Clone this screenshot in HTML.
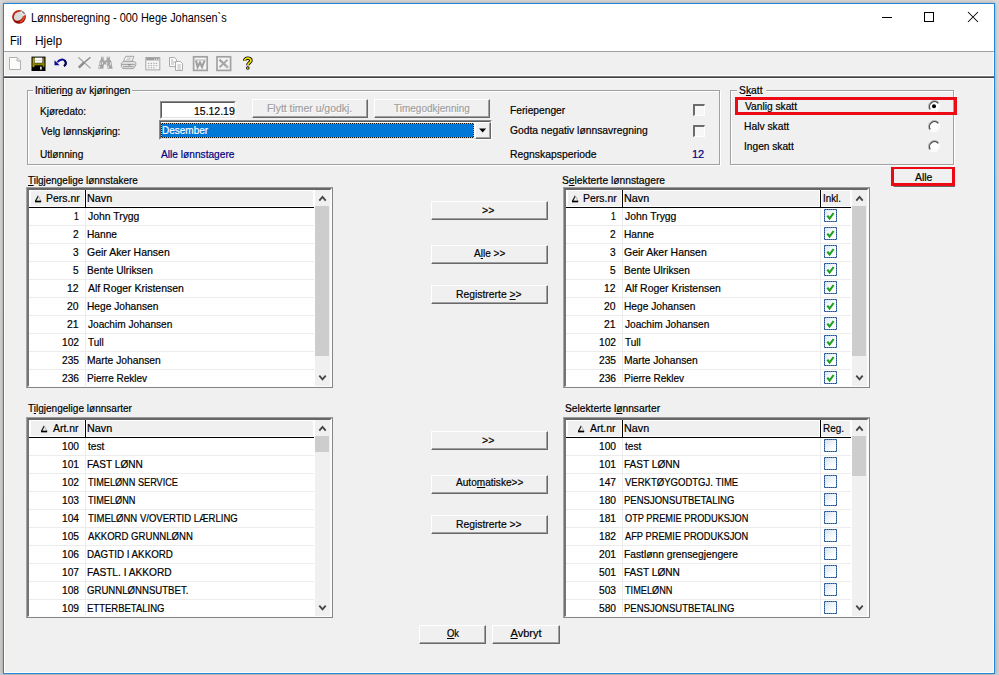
<!DOCTYPE html>
<html lang="no">
<head>
<meta charset="utf-8">
<title>Lønnsberegning - 000 Hege Johansen`s</title>
<style>
*{box-sizing:border-box;margin:0;padding:0}
html,body{width:999px;height:675px;overflow:hidden}
body{background:#d2d2d2;font-family:"Liberation Sans",sans-serif;font-size:11px;position:relative}
#shade{position:absolute;left:0;top:0;width:999px;height:675px;background:linear-gradient(180deg,#dadada 0,#cfcfcf 100%)}
#win{position:absolute;left:3px;top:3px;width:992px;height:671px;border:1px solid #2386d8;background:#f0f0f0;box-shadow:0 0 4px rgba(0,0,0,.28)}
.abs,#root div,#root span,#root svg{position:absolute}
#root{position:absolute;left:0;top:0;width:999px;height:675px}
.t{transform-origin:0 0;-webkit-text-stroke:0.2px currentColor;white-space:nowrap;font-size:11px;line-height:13px;height:13px;color:#000;display:block}
.t12{font-size:12px;line-height:14px;height:14px;-webkit-text-stroke:0}
.t u{text-decoration:underline;text-underline-offset:0.5px;text-decoration-thickness:1px}
.dis{color:#a0a0a0;text-shadow:1px 1px 0 #fff}
/* classic button */
.btn{background:#f0f0f0;border-top:1px solid #fff;border-left:1px solid #fff;border-right:1px solid #696969;border-bottom:1px solid #696969}
.btn:after{content:"";position:absolute;left:0;top:0;right:0;bottom:0;border-right:1px solid #a0a0a0;border-bottom:1px solid #a0a0a0}
/* group box */
.gb{border:1px solid #a0a0a0;box-shadow:1px 1px 0 #fff, inset 1px 1px 0 #fff}
.gbl{background:#f0f0f0;height:3px}
/* sunken field */
.sunk{background:#fff;border-top:1px solid #8a8a8a;border-left:1px solid #8a8a8a;border-right:1px solid #fff;border-bottom:1px solid #fff}
.sunk:after{content:"";position:absolute;left:0;top:0;right:0;bottom:0;border-top:1px solid #5c5c5c;border-left:1px solid #5c5c5c;border-right:1px solid #e3e3e3;border-bottom:1px solid #e3e3e3}
/* list box */
.lb{width:307px;height:201px;background:#fff;border-top:1px solid #9a9a9a;border-left:1px solid #a4a4a4;border-right:1px solid #868686;border-bottom:1px solid #868686}
.lb:after{content:"";position:absolute;left:0;top:0;right:0;bottom:0;border-top:2px solid #676767;border-left:2px solid #747474;border-right:2px solid #fbfbfb;border-bottom:1px solid #fbfbfb}
.hd{height:17px;background:#fff;border-bottom:0}
.hf{height:15px;background:#f0f0f0}
.vd{width:1px;height:18px;background:#000}
.hd:after{content:"";position:absolute;left:0;right:0;top:17px;height:1px;background:#000}
.rs{height:1px;background:#ececec}
.cs{width:1px;height:178px;background:#ececec}
.sb{width:15px;height:196px;background:#f0f0f0}
.th{width:14px;background:#cdcdcd}
.cb{width:13px;height:13px;background:linear-gradient(135deg,#dde7f2 0,#f6f9fc 45%,#fff 70%);border:1px solid #24508c;outline:1px dotted rgba(150,180,220,.5);outline-offset:-1px;overflow:hidden}
.cb svg{left:0;top:0}
.cb.un{background:linear-gradient(135deg,#d6e2ee 0,#f2f6fa 50%,#fff 80%)}
.chk{width:12px;height:12px;background:#f7f7f7;border-top:2px solid #6c6c6c;border-left:2px solid #6c6c6c;border-right:1px solid #fff;border-bottom:1px solid #fff}
.red{border:3px solid #ec0a14}
</style>
</head>
<body>
<div id="shade"></div>
<div id="win"></div>
<div id="root">
<!-- title + menu area -->
<div style="left:4px;top:4px;width:990px;height:47px;background:#fff"></div>
<div style="left:4px;top:51px;width:990px;height:1px;background:#a0a0a0"></div>
<div style="left:4px;top:52px;width:1px;height:621px;background:#fffdf5"></div>
<div style="left:993px;top:52px;width:1px;height:621px;background:#fffdf5"></div>
<div style="left:4px;top:672px;width:990px;height:1px;background:#fffdf5"></div>
<!-- toolbar separators -->
<div style="left:5px;top:75px;width:988px;height:1px;background:#fff"></div>
<div style="left:4px;top:76px;width:990px;height:1px;background:#7c7c7c"></div>
<div style="left:4px;top:77px;width:990px;height:1px;background:#3e3e3e"></div>
<div style="left:5px;top:78px;width:988px;height:1px;background:#fff"></div>

<!-- app icon -->
<svg style="left:11px;top:9px" width="16" height="16" viewBox="0 0 16 16">
 <defs><linearGradient id="ig" x1="0" y1="0" x2="0.3" y2="1"><stop offset="0" stop-color="#c43a20"/><stop offset="0.55" stop-color="#b01c0c"/><stop offset="1" stop-color="#860804"/></linearGradient></defs>
 <circle cx="8" cy="7.8" r="6.9" fill="url(#ig)"/>
 <path d="M13.6 6.2 A6 6 0 0 1 9 13.9 L8.6 12.2 A4.4 4.4 0 0 0 12 6.6 Z" fill="#ee4a1e"/>
 <ellipse cx="7.5" cy="7.3" rx="5.1" ry="4" transform="rotate(-42 7.5 7.3)" fill="#dadada"/>
 <path d="M9.2 2.2 L12.4 1.9 L14.4 5.6 L12.6 7.2 Z" fill="#e9e9e9"/>
 <path d="M11.2 2.3 L13.6 4.9" stroke="#6a6a6a" stroke-width="1.1"/>
</svg>

<!-- caption buttons -->
<div style="left:882px;top:17px;width:10px;height:1px;background:#000"></div>
<div style="left:924px;top:12px;width:10px;height:10px;border:1px solid #000"></div>
<svg style="left:967px;top:11px" width="12" height="12" viewBox="0 0 12 12"><path d="M1 1 L11 11 M11 1 L1 11" stroke="#000" stroke-width="1.05" fill="none"/></svg>

<!-- toolbar icons -->
<!-- new (disabled) -->
<svg style="left:8px;top:56px" width="15" height="16" viewBox="0 0 15 16">
 <path d="M1.5 1.5 H9 L12.5 5 V13.5 H1.5 Z" fill="#fbfbfb" stroke="#b0b0b0" stroke-width="1"/>
 <path d="M9 1.5 V5 H12.5" fill="none" stroke="#b0b0b0" stroke-width="1"/>
 <path d="M2.5 13 V2.5 H8.5" fill="none" stroke="#fff" stroke-width="1"/>
</svg>
<!-- save -->
<svg style="left:31px;top:56px" width="15" height="16" viewBox="0 0 15 16">
 <rect x="0.5" y="0.6" width="14" height="14.4" fill="#000"/>
 <rect x="1.6" y="1.6" width="2" height="9.5" fill="#b4a800"/>
 <rect x="11.6" y="1.6" width="1.8" height="9.5" fill="#8a8200"/>
 <rect x="3.8" y="1.6" width="7.6" height="5.2" fill="#fff"/>
 <rect x="3.8" y="4" width="7.6" height="1" fill="#d8d8d8"/>
 <rect x="1.6" y="7.2" width="11.8" height="2.2" fill="#8c8400"/>
 <rect x="3.6" y="9.8" width="8" height="4.4" fill="#000"/>
 <rect x="9" y="10.6" width="1.8" height="3" fill="#d0d0d0"/>
</svg>
<!-- undo -->
<svg style="left:53px;top:57px" width="15" height="13" viewBox="0 0 15 13">
 <path d="M4.4 5.2 C6.2 2.6 10 1.6 12 3.8 C13.6 5.6 13 8 10.9 9" fill="none" stroke="#0c0c98" stroke-width="1.9"/>
 <path d="M11.6 3.4 C13.4 5.4 13 8 10.9 9" fill="none" stroke="#050540" stroke-width="1.9"/>
 <path d="M1.5 3.3 V8.3 H6.6 Z" fill="#0a0a96"/>
</svg>
<!-- delete X (disabled) -->
<svg style="left:77px;top:56px" width="16" height="16" viewBox="0 0 16 16">
 <path d="M2.4 2.6 L14.2 13.4" stroke="#fff" stroke-width="1"/>
 <path d="M1.4 1.4 L13.6 12.4" stroke="#9a9a9a" stroke-width="1.2"/>
 <path d="M13.4 1.2 L6 7.6" stroke="#8e8e8e" stroke-width="1.5"/>
 <path d="M7 6.6 L1.8 11.6" stroke="#8c8c8c" stroke-width="2.6"/>
</svg>
<!-- binoculars (disabled) -->
<svg style="left:97px;top:56px" width="17" height="16" viewBox="0 0 17 16">
 <g fill="#a4a4a4">
 <path d="M4 0.8 H6.6 V3.4 L7.5 5 L6.3 12.8 H1.1 L2.7 5 L4 3.4 Z"/>
 <path d="M9.7 0.8 H12.9 V3.4 L14.3 5.2 L15.6 12.8 H10.6 L9 5 L9.7 3.4 Z"/>
 <rect x="6.4" y="4.6" width="3.6" height="3.8"/>
 </g>
 <path d="M4.8 1.6 h1 M10.6 1.6 h1.2 M3.2 6.5 v2.5 M2.4 10 v2 M5.4 5.8 v2.4 M9.8 6 v2.6 M11.2 9.6 v2.4 M13.4 6.4 v3" stroke="#e8e8e8" stroke-width="1"/>
</svg>
<!-- printer (disabled) -->
<svg style="left:120px;top:55px" width="17" height="16" viewBox="0 0 17 16">
 <path d="M5.7 1.3 H13.9 L12 6.3 H3.4 Z" fill="#f6f6f6" stroke="#a6a6a6"/>
 <path d="M1.4 8.2 L3.2 6.4 H14.4 L15.8 7.6 V10 L13.4 13.6 H2.8 L1.4 11.4 Z" fill="#e2e2e2" stroke="#a2a2a2"/>
 <path d="M2 9.4 H14.6 M3 11.6 H13.6" stroke="#9e9e9e" stroke-width="1"/>
 <path d="M7 3 H11.6 M6.4 4.6 H10.4" stroke="#c0c0c0" stroke-width=".9"/>
 <rect x="8.2" y="9.2" width="2.6" height="1.2" fill="#888"/>
</svg>
<!-- calendar (disabled) -->
<svg style="left:145px;top:56px" width="16" height="16" viewBox="0 0 16 16">
 <rect x="0.8" y="1.5" width="14" height="12.4" fill="#f4f4f4" stroke="#a8a8a8"/>
 <rect x="1.3" y="2" width="13" height="2.4" fill="#9c9c9c"/>
 <path d="M3 7.4 h1.4 m1.2 0 h1.4 m1.2 0 h1.4 m1.2 0 h1.4 M3 9.6 h1.4 m1.2 0 h1.4 m1.2 0 h1.4 m1.2 0 h1.4 M3 11.8 h1.4 m1.2 0 h1.4 m1.2 0 h1.4" stroke="#a8a8a8" stroke-width="1"/>
 <path d="M9 3.2 h1 m1 0 h1 m1 0 h1" stroke="#f0f0f0" stroke-width="1"/>
</svg>
<!-- copy (disabled) -->
<svg style="left:168px;top:56px" width="16" height="16" viewBox="0 0 16 16">
 <path d="M1.5 1.5 H6.5 L8.5 3.5 V10.5 H1.5 Z" fill="#fcfcfc" stroke="#aaaaaa"/>
 <path d="M3 4 h2 M3 6 h4 M3 8 h3" stroke="#b4b4b4" stroke-width="1"/>
 <path d="M7.5 5.5 H12.5 L14.5 7.5 V14.5 H7.5 Z" fill="#fcfcfc" stroke="#aaaaaa"/>
 <path d="M9.4 9 h3.4 M9.4 11 h3.4 M9.4 13 h3.4" stroke="#b4b4b4" stroke-width="1"/>
</svg>
<!-- word (disabled) -->
<svg style="left:192px;top:55px" width="17" height="17" viewBox="0 0 17 17">
 <rect x="1.6" y="1.8" width="13.6" height="13.6" fill="#f4f4f4" stroke="#a2a2a2" stroke-width="1.7"/>
 <path d="M4 5.4 L5.6 12 L8 7.4 L10 12 L12.6 5.4" fill="none" stroke="#a0a0a0" stroke-width="2.1"/>
 <path d="M3 5 H13.6" stroke="#b8b8b8" stroke-width="1"/>
</svg>
<!-- excel (disabled) -->
<svg style="left:215px;top:55px" width="17" height="17" viewBox="0 0 17 17">
 <rect x="2" y="1.8" width="13.6" height="13.6" fill="#f4f4f4" stroke="#a2a2a2" stroke-width="1.7"/>
 <path d="M4.4 4.6 L13 12.6" fill="none" stroke="#a4a4a4" stroke-width="2.2"/>
 <path d="M12.6 4.6 L8.6 8.4 L4.4 12.4" fill="none" stroke="#a8a8a8" stroke-width="2"/>
 <path d="M9.8 11.8 H13.4" stroke="#c0c0c0" stroke-width="1.2"/>
</svg>
<!-- help ? -->
<svg style="left:242px;top:56px" width="12" height="15" viewBox="0 0 12 15">
 <path d="M2.7 4.6 C2.5 1.5 9 1.3 9 4.5 C9 6.7 5.8 6.7 5.8 9.3" fill="none" stroke="#000" stroke-width="3.4"/>
 <path d="M2.7 4.6 C2.5 1.5 9 1.3 9 4.5 C9 6.7 5.8 6.7 5.8 9.3" fill="none" stroke="#f4e400" stroke-width="1.7"/>
 <circle cx="5.8" cy="12.1" r="1.75" fill="#000"/>
 <circle cx="5.8" cy="12.1" r="0.9" fill="#f4e400"/>
</svg>

<!-- group box: Initiering av kjøringen -->
<div class="gb" style="left:27px;top:90px;width:693px;height:75px"></div>
<div class="gbl" style="left:33px;top:89px;width:99px"></div>
<!-- date field -->
<div class="sunk" style="left:160px;top:101px;width:76px;height:18px"></div>
<!-- disabled buttons -->
<div class="btn" style="left:252px;top:99px;width:116px;height:19px"></div>
<div class="btn" style="left:374px;top:99px;width:116px;height:19px"></div>
<!-- combo -->
<div class="sunk" style="left:159px;top:120px;width:333px;height:20px"></div>
<div style="left:161px;top:123px;width:313px;height:15px;background:#1c1206"></div>
<div style="left:161px;top:123px;width:313px;height:15px;border:1px dotted #f2a45c"></div>
<div style="left:162px;top:124px;width:311px;height:13px;background:#0078d7"></div>
<div class="btn" style="left:475px;top:122px;width:16px;height:17px"></div>
<svg style="left:479px;top:128px" width="8" height="5" viewBox="0 0 8 5"><path d="M0.1 0.4 H7.1 L3.6 4.4 Z" fill="#000"/></svg>
<!-- checkboxes -->
<div class="chk" style="left:693px;top:104px"></div>
<div class="chk" style="left:693px;top:125px"></div>

<!-- group box: Skatt -->
<div class="gb" style="left:730px;top:90px;width:224px;height:75px"></div>
<div class="gbl" style="left:737px;top:89px;width:29px"></div>
<!-- radios -->
<svg style="left:926.5px;top:98.7px" width="14" height="14" viewBox="0 0 14 14"><circle cx="7" cy="7" r="4.6" fill="#fff"/><path d="M11.85 4.20 A5.6 5.6 0 0 1 2.71 10.60" fill="none" stroke="#fff" stroke-width="1.1"/><path d="M2.48 10.79 A5.9 5.9 0 0 1 11.83 3.62" fill="none" stroke="#a8a8a8" stroke-width="0.9"/><path d="M3.28 10.35 A5 5 0 0 1 11.24 4.35" fill="none" stroke="#484848" stroke-width="1.15"/><circle cx="7" cy="7.2" r="2" fill="#000"/></svg>
<svg style="left:926.5px;top:118.5px" width="14" height="14" viewBox="0 0 14 14"><circle cx="7" cy="7" r="4.6" fill="#fff"/><path d="M11.85 4.20 A5.6 5.6 0 0 1 2.71 10.60" fill="none" stroke="#fff" stroke-width="1.1"/><path d="M2.48 10.79 A5.9 5.9 0 0 1 11.83 3.62" fill="none" stroke="#a8a8a8" stroke-width="0.9"/><path d="M3.28 10.35 A5 5 0 0 1 11.24 4.35" fill="none" stroke="#484848" stroke-width="1.15"/></svg>
<svg style="left:926.5px;top:138.5px" width="14" height="14" viewBox="0 0 14 14"><circle cx="7" cy="7" r="4.6" fill="#fff"/><path d="M11.85 4.20 A5.6 5.6 0 0 1 2.71 10.60" fill="none" stroke="#fff" stroke-width="1.1"/><path d="M2.48 10.79 A5.9 5.9 0 0 1 11.83 3.62" fill="none" stroke="#a8a8a8" stroke-width="0.9"/><path d="M3.28 10.35 A5 5 0 0 1 11.24 4.35" fill="none" stroke="#484848" stroke-width="1.15"/></svg>
<!-- Alle button + red highlights -->
<div class="btn" style="left:893px;top:168px;width:62px;height:19px"></div>
<div class="red" style="left:735px;top:97px;width:222px;height:18px"></div>
<div class="red" style="left:891px;top:167px;width:64px;height:19px;border-top-width:2px"></div>

<!-- middle buttons -->
<div class="btn" style="left:431px;top:201px;width:117px;height:19px"></div>
<div class="btn" style="left:431px;top:245px;width:117px;height:19px"></div>
<div class="btn" style="left:431px;top:285px;width:117px;height:19px"></div>
<div class="btn" style="left:431px;top:431px;width:117px;height:19px"></div>
<div class="btn" style="left:431px;top:475px;width:117px;height:19px"></div>
<div class="btn" style="left:431px;top:515px;width:117px;height:19px"></div>
<div class="btn" style="left:419px;top:625px;width:67px;height:19px"></div>
<div class="btn" style="left:492px;top:625px;width:68px;height:19px"></div>

<!-- lists -->
<div class="lb" style="left:26px;top:187px"></div>
<div class="hd" style="left:29px;top:190px;width:285px"></div>
<div class="hf" style="left:31px;top:191px;width:53px"></div>
<div class="hf" style="left:87px;top:191px;width:226px"></div>
<div class="vd" style="left:85px;top:190px"></div>
<div class="rs" style="left:29px;top:225px;width:285px"></div>
<div class="rs" style="left:29px;top:243px;width:285px"></div>
<div class="rs" style="left:29px;top:261px;width:285px"></div>
<div class="rs" style="left:29px;top:279px;width:285px"></div>
<div class="rs" style="left:29px;top:297px;width:285px"></div>
<div class="rs" style="left:29px;top:315px;width:285px"></div>
<div class="rs" style="left:29px;top:333px;width:285px"></div>
<div class="rs" style="left:29px;top:351px;width:285px"></div>
<div class="rs" style="left:29px;top:369px;width:285px"></div>
<div class="cs" style="left:85px;top:208px"></div>
<div class="sb" style="left:315px;top:190px"></div>
<div class="th" style="left:315px;top:206px;height:150px"></div>
<svg class="ar" style="left:317px;top:194px" width="11" height="9" viewBox="0 0 11 9"><path d="M2.3 6.7 L5.5 3 L8.7 6.7" fill="none" stroke="#454545" stroke-width="1.8"/></svg>
<svg class="ar" style="left:317px;top:373px" width="11" height="9" viewBox="0 0 11 9"><path d="M2.3 2.6 L5.5 6.3 L8.7 2.6" fill="none" stroke="#454545" stroke-width="1.8"/></svg>
<svg class="ar" style="left:35px;top:195px" width="8" height="8" viewBox="0 0 8 8"><path d="M0.4 6.4 L3.3 0.9" stroke="#222" stroke-width="1.2" fill="none"/><path d="M3.4 1 L5.9 6" stroke="#aaa" stroke-width="0.9" fill="none"/><path d="M0 6.5 H6.2" stroke="#000" stroke-width="1.7"/></svg>
<div class="lb" style="left:563px;top:187px"></div>
<div class="hd" style="left:566px;top:190px;width:285px"></div>
<div class="hf" style="left:568px;top:191px;width:53px"></div>
<div class="hf" style="left:624px;top:191px;width:195px"></div>
<div class="hf" style="left:822px;top:191px;width:28px"></div>
<div class="vd" style="left:622px;top:190px"></div>
<div class="rs" style="left:566px;top:225px;width:285px"></div>
<div class="rs" style="left:566px;top:243px;width:285px"></div>
<div class="rs" style="left:566px;top:261px;width:285px"></div>
<div class="rs" style="left:566px;top:279px;width:285px"></div>
<div class="rs" style="left:566px;top:297px;width:285px"></div>
<div class="rs" style="left:566px;top:315px;width:285px"></div>
<div class="rs" style="left:566px;top:333px;width:285px"></div>
<div class="rs" style="left:566px;top:351px;width:285px"></div>
<div class="rs" style="left:566px;top:369px;width:285px"></div>
<div class="cs" style="left:622px;top:208px"></div>
<div class="vd" style="left:820px;top:190px"></div>
<div class="cs" style="left:820px;top:208px"></div>
<div class="sb" style="left:852px;top:190px"></div>
<div class="th" style="left:852px;top:206px;height:150px"></div>
<svg class="ar" style="left:854px;top:194px" width="11" height="9" viewBox="0 0 11 9"><path d="M2.3 6.7 L5.5 3 L8.7 6.7" fill="none" stroke="#454545" stroke-width="1.8"/></svg>
<svg class="ar" style="left:854px;top:373px" width="11" height="9" viewBox="0 0 11 9"><path d="M2.3 2.6 L5.5 6.3 L8.7 2.6" fill="none" stroke="#454545" stroke-width="1.8"/></svg>
<svg class="ar" style="left:572px;top:195px" width="8" height="8" viewBox="0 0 8 8"><path d="M0.4 6.4 L3.3 0.9" stroke="#222" stroke-width="1.2" fill="none"/><path d="M3.4 1 L5.9 6" stroke="#aaa" stroke-width="0.9" fill="none"/><path d="M0 6.5 H6.2" stroke="#000" stroke-width="1.7"/></svg>
<div class="cb" style="left:824px;top:209px;height:13px"><svg width="11" height="11" viewBox="0 0 11 11"><path d="M2.3 5.6 L4.6 8.5 L8.6 3" fill="none" stroke="#1d9f1d" stroke-width="2.1" stroke-linejoin="miter"/></svg></div>
<div class="cb" style="left:824px;top:227px;height:13px"><svg width="11" height="11" viewBox="0 0 11 11"><path d="M2.3 5.6 L4.6 8.5 L8.6 3" fill="none" stroke="#1d9f1d" stroke-width="2.1" stroke-linejoin="miter"/></svg></div>
<div class="cb" style="left:824px;top:245px;height:13px"><svg width="11" height="11" viewBox="0 0 11 11"><path d="M2.3 5.6 L4.6 8.5 L8.6 3" fill="none" stroke="#1d9f1d" stroke-width="2.1" stroke-linejoin="miter"/></svg></div>
<div class="cb" style="left:824px;top:263px;height:13px"><svg width="11" height="11" viewBox="0 0 11 11"><path d="M2.3 5.6 L4.6 8.5 L8.6 3" fill="none" stroke="#1d9f1d" stroke-width="2.1" stroke-linejoin="miter"/></svg></div>
<div class="cb" style="left:824px;top:281px;height:13px"><svg width="11" height="11" viewBox="0 0 11 11"><path d="M2.3 5.6 L4.6 8.5 L8.6 3" fill="none" stroke="#1d9f1d" stroke-width="2.1" stroke-linejoin="miter"/></svg></div>
<div class="cb" style="left:824px;top:299px;height:13px"><svg width="11" height="11" viewBox="0 0 11 11"><path d="M2.3 5.6 L4.6 8.5 L8.6 3" fill="none" stroke="#1d9f1d" stroke-width="2.1" stroke-linejoin="miter"/></svg></div>
<div class="cb" style="left:824px;top:317px;height:13px"><svg width="11" height="11" viewBox="0 0 11 11"><path d="M2.3 5.6 L4.6 8.5 L8.6 3" fill="none" stroke="#1d9f1d" stroke-width="2.1" stroke-linejoin="miter"/></svg></div>
<div class="cb" style="left:824px;top:335px;height:13px"><svg width="11" height="11" viewBox="0 0 11 11"><path d="M2.3 5.6 L4.6 8.5 L8.6 3" fill="none" stroke="#1d9f1d" stroke-width="2.1" stroke-linejoin="miter"/></svg></div>
<div class="cb" style="left:824px;top:353px;height:13px"><svg width="11" height="11" viewBox="0 0 11 11"><path d="M2.3 5.6 L4.6 8.5 L8.6 3" fill="none" stroke="#1d9f1d" stroke-width="2.1" stroke-linejoin="miter"/></svg></div>
<div class="cb" style="left:824px;top:371px;height:13px"><svg width="11" height="11" viewBox="0 0 11 11"><path d="M2.3 5.6 L4.6 8.5 L8.6 3" fill="none" stroke="#1d9f1d" stroke-width="2.1" stroke-linejoin="miter"/></svg></div>
<div class="lb" style="left:26px;top:417px"></div>
<div class="hd" style="left:29px;top:420px;width:285px"></div>
<div class="hf" style="left:31px;top:421px;width:53px"></div>
<div class="hf" style="left:87px;top:421px;width:226px"></div>
<div class="vd" style="left:85px;top:420px"></div>
<div class="rs" style="left:29px;top:455px;width:285px"></div>
<div class="rs" style="left:29px;top:473px;width:285px"></div>
<div class="rs" style="left:29px;top:491px;width:285px"></div>
<div class="rs" style="left:29px;top:509px;width:285px"></div>
<div class="rs" style="left:29px;top:527px;width:285px"></div>
<div class="rs" style="left:29px;top:545px;width:285px"></div>
<div class="rs" style="left:29px;top:563px;width:285px"></div>
<div class="rs" style="left:29px;top:581px;width:285px"></div>
<div class="rs" style="left:29px;top:599px;width:285px"></div>
<div class="cs" style="left:85px;top:438px"></div>
<div class="sb" style="left:315px;top:420px"></div>
<div class="th" style="left:315px;top:436px;height:16px"></div>
<svg class="ar" style="left:317px;top:424px" width="11" height="9" viewBox="0 0 11 9"><path d="M2.3 6.7 L5.5 3 L8.7 6.7" fill="none" stroke="#454545" stroke-width="1.8"/></svg>
<svg class="ar" style="left:317px;top:603px" width="11" height="9" viewBox="0 0 11 9"><path d="M2.3 2.6 L5.5 6.3 L8.7 2.6" fill="none" stroke="#454545" stroke-width="1.8"/></svg>
<svg class="ar" style="left:40.6px;top:425px" width="8" height="8" viewBox="0 0 8 8"><path d="M0.4 6.4 L3.3 0.9" stroke="#222" stroke-width="1.2" fill="none"/><path d="M3.4 1 L5.9 6" stroke="#aaa" stroke-width="0.9" fill="none"/><path d="M0 6.5 H6.2" stroke="#000" stroke-width="1.7"/></svg>
<div class="lb" style="left:563px;top:417px"></div>
<div class="hd" style="left:566px;top:420px;width:285px"></div>
<div class="hf" style="left:568px;top:421px;width:53px"></div>
<div class="hf" style="left:624px;top:421px;width:195px"></div>
<div class="hf" style="left:822px;top:421px;width:28px"></div>
<div class="vd" style="left:622px;top:420px"></div>
<div class="rs" style="left:566px;top:455px;width:285px"></div>
<div class="rs" style="left:566px;top:473px;width:285px"></div>
<div class="rs" style="left:566px;top:491px;width:285px"></div>
<div class="rs" style="left:566px;top:509px;width:285px"></div>
<div class="rs" style="left:566px;top:527px;width:285px"></div>
<div class="rs" style="left:566px;top:545px;width:285px"></div>
<div class="rs" style="left:566px;top:563px;width:285px"></div>
<div class="rs" style="left:566px;top:581px;width:285px"></div>
<div class="rs" style="left:566px;top:599px;width:285px"></div>
<div class="cs" style="left:622px;top:438px"></div>
<div class="vd" style="left:820px;top:420px"></div>
<div class="cs" style="left:820px;top:438px"></div>
<div class="sb" style="left:852px;top:420px"></div>
<div class="th" style="left:852px;top:436px;height:40px"></div>
<svg class="ar" style="left:854px;top:424px" width="11" height="9" viewBox="0 0 11 9"><path d="M2.3 6.7 L5.5 3 L8.7 6.7" fill="none" stroke="#454545" stroke-width="1.8"/></svg>
<svg class="ar" style="left:854px;top:603px" width="11" height="9" viewBox="0 0 11 9"><path d="M2.3 2.6 L5.5 6.3 L8.7 2.6" fill="none" stroke="#454545" stroke-width="1.8"/></svg>
<svg class="ar" style="left:577.6px;top:425px" width="8" height="8" viewBox="0 0 8 8"><path d="M0.4 6.4 L3.3 0.9" stroke="#222" stroke-width="1.2" fill="none"/><path d="M3.4 1 L5.9 6" stroke="#aaa" stroke-width="0.9" fill="none"/><path d="M0 6.5 H6.2" stroke="#000" stroke-width="1.7"/></svg>
<div class="cb un" style="left:824px;top:439px;height:13px"></div>
<div class="cb un" style="left:824px;top:457px;height:13px"></div>
<div class="cb un" style="left:824px;top:475px;height:13px"></div>
<div class="cb un" style="left:824px;top:493px;height:13px"></div>
<div class="cb un" style="left:824px;top:511px;height:13px"></div>
<div class="cb un" style="left:824px;top:529px;height:13px"></div>
<div class="cb un" style="left:824px;top:547px;height:13px"></div>
<div class="cb un" style="left:824px;top:565px;height:13px"></div>
<div class="cb un" style="left:824px;top:583px;height:13px"></div>
<div class="cb un" style="left:824px;top:601px;height:13px"></div>
<!-- text -->
<span class="t t12" style="left:30.79px;top:11.00px;transform:scaleX(0.9108)">Lønnsberegning - 000 Hege Johansen`s</span>
<span class="t t12" style="left:9.76px;top:34.00px;transform:scaleX(0.9364)">Fil</span>
<span class="t t12" style="left:34.51px;top:34.00px;transform:scaleX(0.9885)">Hjelp</span>
<span class="t" style="left:34.69px;top:84.00px;transform:scaleX(0.9126)">Initieri<u>n</u>g av kjøringen</span>
<span class="t" style="left:40.09px;top:105.00px;transform:scaleX(0.9082)">Kjøredato:</span>
<span class="t" style="left:41.00px;top:125.00px;transform:scaleX(0.9070)">Velg lønnskjøring:</span>
<span class="t" style="left:40.08px;top:148.00px;transform:scaleX(0.9200)">Utlønning</span>
<span class="t" style="left:161.00px;top:148.00px;color:#000080;transform:scaleX(0.9241)">Alle lønnstagere</span>
<span class="t" style="left:194.05px;top:105.00px;transform:scaleX(0.9512)">15.12.19</span>
<span class="t" style="left:162.09px;top:124.00px;color:#fff;transform:scaleX(0.9100)">Desember</span>
<span class="t dis" style="left:267.35px;top:102.00px;transform:scaleX(0.9477)">Flytt timer u/godkj.</span>
<span class="t dis" style="left:394.25px;top:102.00px;transform:scaleX(0.9096)">Timegodkjenning</span>
<span class="t" style="left:509.57px;top:104.00px;transform:scaleX(0.9310)">Feriepenger</span>
<span class="t" style="left:509.56px;top:124.00px;transform:scaleX(0.9379)">Godta negativ lønnsavregning</span>
<span class="t" style="left:509.56px;top:148.00px;transform:scaleX(0.9444)">Regnskapsperiode</span>
<span class="t" style="left:692.00px;top:148.00px;color:#000080;transform:scaleX(1.0000)">12</span>
<span class="t" style="left:738.56px;top:84.00px;transform:scaleX(0.9375)">S<u>k</u>att</span>
<span class="t" style="left:745.00px;top:100.00px;transform:scaleX(0.9286)">Vanlig skatt</span>
<span class="t" style="left:744.06px;top:120.00px;transform:scaleX(0.9362)">Halv skatt</span>
<span class="t" style="left:744.08px;top:140.00px;transform:scaleX(0.9245)">Ingen skatt</span>
<span class="t" style="left:915.00px;top:171.00px;transform:scaleX(0.9444)">Alle</span>
<span class="t" style="left:28.00px;top:174.00px;transform:scaleX(0.9016)"><u>T</u>ilgjengelige lønnstakere</span>
<span class="t" style="left:561.87px;top:174.00px;transform:scaleX(0.9312)">S<u>e</u>lekterte lønnstagere</span>
<span class="t" style="left:28.00px;top:402.00px;transform:scaleX(0.9123)">T<u>i</u>lgjengelige lønnsarter</span>
<span class="t" style="left:564.67px;top:402.00px;transform:scaleX(0.9307)">Selekterte l<u>ø</u>nnsarter</span>
<span class="t" style="left:482.29px;top:204.00px;transform:scaleX(0.9583)">&gt;&gt;</span>
<span class="t" style="left:473.50px;top:247.00px;transform:scaleX(0.9118)">A<u>l</u>le &gt;&gt;</span>
<span class="t" style="left:456.06px;top:288.00px;transform:scaleX(0.9412)">Registrerte <u>&gt;</u>&gt;</span>
<span class="t" style="left:482.29px;top:434.00px;transform:scaleX(0.9583)">&gt;&gt;</span>
<span class="t" style="left:455.50px;top:476.00px;transform:scaleX(0.9178)">Auto<u>m</u>atiske&gt;&gt;</span>
<span class="t" style="left:456.06px;top:518.00px;transform:scaleX(0.9412)">Re<u>g</u>istrerte &gt;&gt;</span>
<span class="t" style="left:446.50px;top:627.00px;transform:scaleX(0.8571)"><u>O</u>k</span>
<span class="t" style="left:510.50px;top:627.00px;transform:scaleX(1.0000)"><u>A</u>vbryt</span>
<span class="t" style="left:45.75px;top:192.00px;transform:scaleX(0.9500)">Pers.nr</span>
<span class="t" style="left:87.22px;top:192.00px;transform:scaleX(0.9792)">Navn</span>
<span class="t" style="left:73.72px;top:210.00px;transform:scaleX(0.7800)">1</span>
<span class="t" style="left:88.00px;top:210.00px;transform:scaleX(0.9444)">John Trygg</span>
<span class="t" style="left:72.88px;top:228.00px;transform:scaleX(0.9200)">2</span>
<span class="t" style="left:87.07px;top:228.00px;transform:scaleX(0.9258)">Hanne</span>
<span class="t" style="left:72.88px;top:246.00px;transform:scaleX(0.9200)">3</span>
<span class="t" style="left:87.05px;top:246.00px;transform:scaleX(0.9529)">Geir Aker Hansen</span>
<span class="t" style="left:72.88px;top:264.00px;transform:scaleX(0.9200)">5</span>
<span class="t" style="left:87.08px;top:264.00px;transform:scaleX(0.9200)">Bente Ulriksen</span>
<span class="t" style="left:67.05px;top:282.00px;transform:scaleX(0.9455)">12</span>
<span class="t" style="left:88.00px;top:282.00px;transform:scaleX(0.9500)">Alf Roger Kristensen</span>
<span class="t" style="left:67.05px;top:300.00px;transform:scaleX(0.9455)">20</span>
<span class="t" style="left:87.07px;top:300.00px;transform:scaleX(0.9263)">Hege Johansen</span>
<span class="t" style="left:67.05px;top:318.00px;transform:scaleX(0.9455)">21</span>
<span class="t" style="left:88.00px;top:318.00px;transform:scaleX(0.9198)">Joachim Johansen</span>
<span class="t" style="left:61.67px;top:336.00px;transform:scaleX(0.9294)">102</span>
<span class="t" style="left:88.00px;top:336.00px;transform:scaleX(0.9059)">Tull</span>
<span class="t" style="left:61.67px;top:354.00px;transform:scaleX(0.9294)">235</span>
<span class="t" style="left:87.06px;top:354.00px;transform:scaleX(0.9351)">Marte Johansen</span>
<span class="t" style="left:61.67px;top:372.00px;transform:scaleX(0.9294)">236</span>
<span class="t" style="left:87.09px;top:372.00px;transform:scaleX(0.9108)">Pierre Reklev</span>
<span class="t" style="left:582.75px;top:192.00px;transform:scaleX(0.9500)">Pers.nr</span>
<span class="t" style="left:624.22px;top:192.00px;transform:scaleX(0.9792)">Navn</span>
<span class="t" style="left:822.61px;top:192.00px;transform:scaleX(0.8889)">Inkl.</span>
<span class="t" style="left:610.72px;top:210.00px;transform:scaleX(0.7800)">1</span>
<span class="t" style="left:625.00px;top:210.00px;transform:scaleX(0.9444)">John Trygg</span>
<span class="t" style="left:609.88px;top:228.00px;transform:scaleX(0.9200)">2</span>
<span class="t" style="left:624.07px;top:228.00px;transform:scaleX(0.9258)">Hanne</span>
<span class="t" style="left:609.88px;top:246.00px;transform:scaleX(0.9200)">3</span>
<span class="t" style="left:624.05px;top:246.00px;transform:scaleX(0.9529)">Geir Aker Hansen</span>
<span class="t" style="left:609.88px;top:264.00px;transform:scaleX(0.9200)">5</span>
<span class="t" style="left:624.08px;top:264.00px;transform:scaleX(0.9200)">Bente Ulriksen</span>
<span class="t" style="left:604.05px;top:282.00px;transform:scaleX(0.9455)">12</span>
<span class="t" style="left:625.00px;top:282.00px;transform:scaleX(0.9500)">Alf Roger Kristensen</span>
<span class="t" style="left:604.05px;top:300.00px;transform:scaleX(0.9455)">20</span>
<span class="t" style="left:624.07px;top:300.00px;transform:scaleX(0.9263)">Hege Johansen</span>
<span class="t" style="left:604.05px;top:318.00px;transform:scaleX(0.9455)">21</span>
<span class="t" style="left:625.00px;top:318.00px;transform:scaleX(0.9198)">Joachim Johansen</span>
<span class="t" style="left:598.67px;top:336.00px;transform:scaleX(0.9294)">102</span>
<span class="t" style="left:625.00px;top:336.00px;transform:scaleX(0.9059)">Tull</span>
<span class="t" style="left:598.67px;top:354.00px;transform:scaleX(0.9294)">235</span>
<span class="t" style="left:624.06px;top:354.00px;transform:scaleX(0.9351)">Marte Johansen</span>
<span class="t" style="left:598.67px;top:372.00px;transform:scaleX(0.9294)">236</span>
<span class="t" style="left:624.09px;top:372.00px;transform:scaleX(0.9108)">Pierre Reklev</span>
<span class="t" style="left:53.40px;top:422.00px;transform:scaleX(0.9481)">Art.nr</span>
<span class="t" style="left:87.22px;top:422.00px;transform:scaleX(0.9792)">Navn</span>
<span class="t" style="left:61.67px;top:440.00px;transform:scaleX(0.9294)">100</span>
<span class="t" style="left:88.00px;top:440.00px;transform:scaleX(0.9167)">test</span>
<span class="t" style="left:61.67px;top:458.00px;transform:scaleX(0.9294)">101</span>
<span class="t" style="left:87.08px;top:458.00px;transform:scaleX(0.9153)">FAST LØNN</span>
<span class="t" style="left:61.67px;top:476.00px;transform:scaleX(0.9294)">102</span>
<span class="t" style="left:88.00px;top:476.00px;transform:scaleX(0.8333)">TIMELØNN SERVICE</span>
<span class="t" style="left:61.67px;top:494.00px;transform:scaleX(0.9294)">103</span>
<span class="t" style="left:88.00px;top:494.00px;transform:scaleX(0.8339)">TIMELØNN</span>
<span class="t" style="left:61.67px;top:512.00px;transform:scaleX(0.9294)">104</span>
<span class="t" style="left:88.00px;top:512.00px;transform:scaleX(0.8663)">TIMELØNN V/OVERTID LÆRLING</span>
<span class="t" style="left:61.67px;top:530.00px;transform:scaleX(0.9294)">105</span>
<span class="t" style="left:88.00px;top:530.00px;transform:scaleX(0.8708)">AKKORD GRUNNLØNN</span>
<span class="t" style="left:61.67px;top:548.00px;transform:scaleX(0.9294)">106</span>
<span class="t" style="left:87.11px;top:548.00px;transform:scaleX(0.8895)">DAGTID I AKKORD</span>
<span class="t" style="left:61.67px;top:566.00px;transform:scaleX(0.9294)">107</span>
<span class="t" style="left:87.08px;top:566.00px;transform:scaleX(0.9222)">FASTL. I AKKORD</span>
<span class="t" style="left:61.67px;top:584.00px;transform:scaleX(0.9294)">108</span>
<span class="t" style="left:87.13px;top:584.00px;transform:scaleX(0.8728)">GRUNNLØNNSUTBET.</span>
<span class="t" style="left:61.67px;top:602.00px;transform:scaleX(0.9294)">109</span>
<span class="t" style="left:87.14px;top:602.00px;transform:scaleX(0.8636)">ETTERBETALING</span>
<span class="t" style="left:590.40px;top:422.00px;transform:scaleX(0.9481)">Art.nr</span>
<span class="t" style="left:624.22px;top:422.00px;transform:scaleX(0.9792)">Navn</span>
<span class="t" style="left:822.60px;top:422.00px;transform:scaleX(0.9048)">Reg.</span>
<span class="t" style="left:598.67px;top:440.00px;transform:scaleX(0.9294)">100</span>
<span class="t" style="left:625.00px;top:440.00px;transform:scaleX(0.9167)">test</span>
<span class="t" style="left:598.67px;top:458.00px;transform:scaleX(0.9294)">101</span>
<span class="t" style="left:624.08px;top:458.00px;transform:scaleX(0.9153)">FAST LØNN</span>
<span class="t" style="left:598.67px;top:476.00px;transform:scaleX(0.9294)">147</span>
<span class="t" style="left:625.00px;top:476.00px;transform:scaleX(0.8669)">VERKTØYGODTGJ. TIME</span>
<span class="t" style="left:598.67px;top:494.00px;transform:scaleX(0.9294)">180</span>
<span class="t" style="left:624.13px;top:494.00px;transform:scaleX(0.8651)">PENSJONSUTBETALING</span>
<span class="t" style="left:598.67px;top:512.00px;transform:scaleX(0.9294)">181</span>
<span class="t" style="left:625.00px;top:512.00px;transform:scaleX(0.8390)">OTP PREMIE PRODUKSJON</span>
<span class="t" style="left:598.67px;top:530.00px;transform:scaleX(0.9294)">182</span>
<span class="t" style="left:625.00px;top:530.00px;transform:scaleX(0.8448)">AFP PREMIE PRODUKSJON</span>
<span class="t" style="left:598.67px;top:548.00px;transform:scaleX(0.9294)">201</span>
<span class="t" style="left:624.07px;top:548.00px;transform:scaleX(0.9314)">Fastlønn grensegjengere</span>
<span class="t" style="left:598.67px;top:566.00px;transform:scaleX(0.9294)">501</span>
<span class="t" style="left:624.08px;top:566.00px;transform:scaleX(0.9153)">FAST LØNN</span>
<span class="t" style="left:598.67px;top:584.00px;transform:scaleX(0.9294)">503</span>
<span class="t" style="left:625.00px;top:584.00px;transform:scaleX(0.8339)">TIMELØNN</span>
<span class="t" style="left:598.67px;top:602.00px;transform:scaleX(0.9294)">580</span>
<span class="t" style="left:624.13px;top:602.00px;transform:scaleX(0.8651)">PENSJONSUTBETALING</span>
</div>
</body>
</html>
